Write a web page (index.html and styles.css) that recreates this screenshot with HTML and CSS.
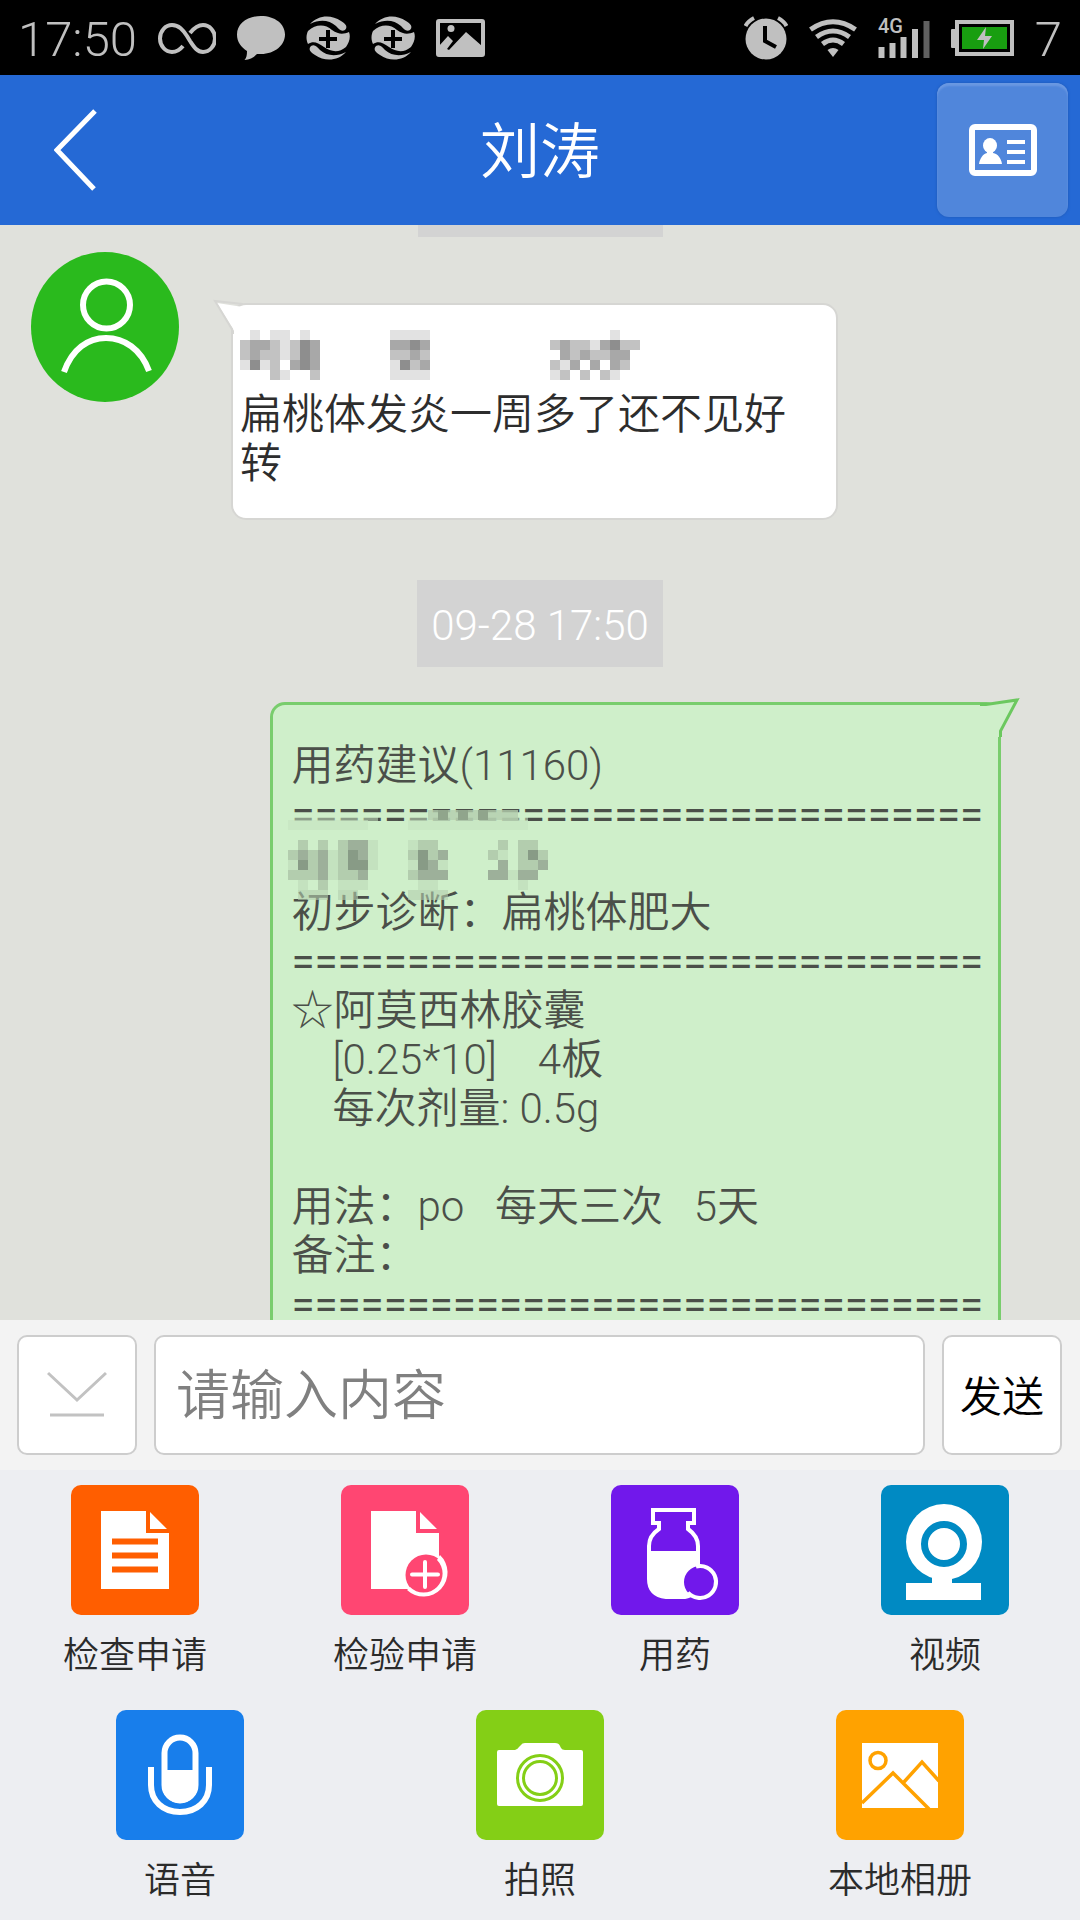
FILE: index.html
```html
<!DOCTYPE html>
<html lang="zh-CN">
<head>
<meta charset="utf-8">
<meta name="viewport" content="width=device-width, initial-scale=1">
<title>刘涛</title>
<link rel="stylesheet" href="styles.css">
</head>
<body>
<div class="status-bar">
  <div class="status-group">
    <span class="status-text">17:50</span>
    <svg class="status-icon" width="58" height="44" viewBox="0 0 58 44" aria-hidden="true"><path d="M25 30c-4 5-8 6-11 6a12 13.500 0 0 1 0-27c7 0 11 5 15 11l3 5c4 6 7 11 13 11a12 13.500 0 0 0 0-27c-5 0-9 3-13 8" fill="none" stroke="#c0c0c0" stroke-width="4"/></svg>
    <svg class="status-icon" width="48" height="44" viewBox="0 0 48 44" aria-hidden="true"><path d="M24 0c14 0 24 8 24 18.500S38 38 24 38h-4c-3 3-7 6-12.500 6 2-2 2.500-5 2.500-9C4 31 0 26 0 18.500 0 8 10 0 24 0z" fill="#c0c0c0"/></svg>
    <svg class="status-icon" width="44" height="44" viewBox="0 0 44 44" aria-hidden="true"><g id="plus-badge"><path d="M4 8C12-1 25-2 35 5c5 3 7 6 4 9-4 2-6-1-9-4C23 4 14 3 4 8zM40 36c-8 9-21 10-31 3-5-3-7-6-4-9 4-2 6 1 9 4 7 6 16 7 26 2z" fill="#c0c0c0"/><path d="M2 15c8-7 17-7 24-1 7 5 12 4 17 2 2 5 0 11-3 15-7 6-15 5-22 0-7-5-11-6-16-3-2-4-2-9 0-13z" fill="#c0c0c0"/><path d="M22 14v18M13 23h18" stroke="#000" stroke-width="4"/></g></svg>
    <svg class="status-icon" width="44" height="44" viewBox="0 0 44 44" aria-hidden="true"><use href="#plus-badge"/></svg>
    <svg class="status-icon" width="49" height="38" viewBox="0 0 49 38" aria-hidden="true"><rect x="2" y="2" width="45" height="34" rx="1" fill="none" stroke="#c0c0c0" stroke-width="4"/><circle cx="15" cy="9.500" r="3.500" fill="#c0c0c0"/><path d="M3 27l9-10 5 5-6 8 2 1L30 13l16 14v9H3z" fill="#c0c0c0"/></svg>
  </div>
  <div class="status-group">
    <svg class="status-icon" width="44" height="44" viewBox="0 0 44 44" aria-hidden="true"><circle cx="22" cy="23" r="20.500" fill="#c0c0c0"/><path d="M1.500 10Q4 5 10 2M42.500 10Q40 5 34 2" fill="none" stroke="#c0c0c0" stroke-width="4"/><path d="M21 10v15l11 6" fill="none" stroke="#000" stroke-width="4"/></svg>
    <svg class="status-icon" width="48" height="38" viewBox="0 0 48 38" aria-hidden="true"><g fill="none" stroke="#c0c0c0" stroke-width="5"><path d="M1.500 10.500Q24-5 46.500 10.500"/><path d="M7.500 18Q24 6 40.500 18"/><path d="M13.500 25Q24 17 34.500 25"/></g><path d="M18.500 31q5.500-4 11 0L24 38z" fill="#c0c0c0"/></svg>
    <svg class="status-icon signal" width="52" height="42" viewBox="0 0 52 42" aria-hidden="true"><text class="network" x="0" y="16">4G</text><path d="M3.500 30v11M14.500 26v15M25.500 20v21M37 12v29" stroke="#c0c0c0" stroke-width="6"/><path d="M48.500 4v37" stroke="#606060" stroke-width="6"/></svg>
    <svg class="status-icon" width="63" height="36" viewBox="0 0 63 36" aria-hidden="true"><rect y="9" width="5" height="19" rx="1" fill="#c0c0c0"/><rect x="6" y="2" width="55" height="32" fill="none" stroke="#c0c0c0" stroke-width="4"/><rect x="11" y="7" width="45" height="22" fill="#189e10"/><path d="M35 7l-9 13h7l-1 9 9-13h-7z" fill="#c0c0c0"/></svg>
    <span class="status-text">7</span>
  </div>
</div>

<header class="title-bar">
  <button class="back" type="button" aria-label="返回"><svg width="44" height="84" viewBox="0 0 44 84" aria-hidden="true"><path d="M41 3L3 42l37 39" fill="none" stroke="#fff" stroke-width="5"/></svg></button>
  <h1 class="title">刘涛</h1>
  <button class="card-button" type="button" aria-label="名片"><svg width="68" height="52" viewBox="0 0 68 52" aria-hidden="true"><rect x="3" y="3" width="62" height="46" rx="3" fill="none" stroke="#fff" stroke-width="6"/><ellipse cx="21" cy="21.500" rx="7" ry="7.500" fill="#fff"/><path d="M18 25h6v4c5 1 8 5 9 11H10c1-6 4-10 8-11z" fill="#fff"/><path d="M38 18h18M38 28h18M38 38h18" stroke="#fff" stroke-width="4"/></svg></button>
</header>

<main class="chat">
  <div class="time-edge"></div>

  <div class="incoming">
    <svg class="avatar" width="148" height="150" viewBox="0 0 148 150" aria-hidden="true"><ellipse cx="74" cy="75" rx="74" ry="75" fill="#2aba1d"/><ellipse cx="75.500" cy="53" rx="23.500" ry="23.500" fill="none" stroke="#fff" stroke-width="6"/><path d="M33 120C41 97 57 86 75 86s35 11 43 33" fill="none" stroke="#fff" stroke-width="6"/></svg>
    <div class="bubble bubble-in">
      <svg class="tail-in" width="40" height="40" viewBox="0 0 40 40" aria-hidden="true"><path d="M22 34L4 5l26 4v25z" fill="#fff"/><path d="M20 36V33L2 3l28 3" fill="none" stroke="#d6d6d3" stroke-width="2"/></svg>
      <svg class="masked-in" width="400" height="60" viewBox="0 0 40 6" shape-rendering="crispEdges" aria-hidden="true">
        <path stroke="#e2e2e2" d="M1 .5h1M3 .5h2M6 .5h1M15 .5h4M37 .5h1M4 1.500h1M35 1.500h1M4 2.500h1M0 3.500h1M2 3.500h1M15 3.500h1M32 3.500h1M4 4.500h1M15 4.500h4M31 4.500h1M37 4.500h1"/>
        <path stroke="#c2c2c2" d="M0 1.500h1M3 1.500h1M5 1.500h1M31 1.500h1M33 1.500h2M38 1.500h2M0 2.500h1M2 2.500h2M5 2.500h1M15 2.500h2M18 2.500h1M33 2.500h1M35 2.500h2M3 3.500h1M17 3.500h1M31 3.500h1M38 3.500h1M3 4.500h1M7 4.500h1M32 4.500h1M34 4.500h1M36 4.500h1"/>
        <path stroke="#a8a8a8" d="M1 1.500h2M7 1.500h1M15 1.500h2M18 1.500h1M32 1.500h1M36 1.500h1M1 2.500h1M7 2.500h1M17 2.500h1M32 2.500h1M34 2.500h1M37 2.500h2M5 3.500h1M7 3.500h1M18 3.500h1M33 3.500h1M35 3.500h1M37 3.500h1"/>
        <path stroke="#8e8e8e" d="M6 1.500h1M17 1.500h1M37 1.500h1M6 2.500h1M1 3.500h1M6 3.500h1M16 3.500h1"/>
      </svg>
      <p class="line">扁桃体发炎一周多了还不见好转</p>
    </div>
  </div>

  <time class="time">09-28 17:50</time>

  <div class="bubble bubble-out">
    <svg class="tail-out" width="40" height="40" viewBox="0 0 40 40" aria-hidden="true"><path d="M5 8L37 4 20 34v6H5z" fill="#cfefca"/><path d="M0 7.500h6L37 3 20.500 34v6" fill="none" stroke="#6cc85f" stroke-width="3"/></svg>
    <p class="line">用药建议(11160)</p>
    <p class="line rule">==============================</p>
    <svg class="masked-out" width="270" height="49" viewBox="0 0 270 49" shape-rendering="crispEdges" aria-hidden="true">
      <g transform="translate(-3 1) scale(10)">
        <path stroke="#cfefca" stroke-opacity=".5" d="M0-1.900h9M12-1.900h12"/>
        <path stroke="#b3cdae" stroke-opacity=".8" d="M14-2.500h9"/>
        <path stroke="#90a58c" d="M15-2.500h1M17-2.500h1M19-2.500h1"/>
        <path stroke="#c4e2bf" d="M8 .5h1M12 .5h1M4 1.500h1M8 1.500h1M21 1.500h1M0 2.500h1M4 2.500h1M8 2.500h1M12 2.500h1M15 2.500h1M4 3.500h1M22 3.500h1M1 4.500h1M5 4.500h3M13 4.500h2M23 4.500h1"/>
        <path stroke="#c4e2bf" stroke-opacity=".6" d="M0-1.500h8M12-1.500h12"/>
        <path stroke="#b3cdae" d="M1 .5h1M3 .5h1M5 .5h1M13 .5h2M21 .5h1M23 .5h2M0 1.500h1M2 1.500h1M5 1.500h1M12 1.500h1M14 1.500h1M20 1.500h1M23 1.500h1M25 1.500h1M2 2.500h1M5 2.500h1M23 2.500h2M0 3.500h3M5 3.500h2M12 3.500h1M3 4.500h1"/>
        <path stroke="#b3cdae" stroke-opacity=".6" d="M1 5.500h3M5 5.500h2M12 5.500h4"/>
        <path stroke="#9db09a" d="M6 .5h2M1 1.500h1M3 1.500h1M7 1.500h1M15 1.500h1M3 2.500h1M14 2.500h1M21 2.500h1M25 2.500h1M3 3.500h1M7 3.500h1M13 3.500h3M20 3.500h2M23 3.500h2"/>
        <path stroke="#889b86" d="M6 1.500h1M13 1.500h1M24 1.500h1M1 2.500h1M6 2.500h2M13 2.500h1"/>
      </g>
    </svg>
    <p class="line">初步诊断：扁桃体肥大</p>
    <p class="line rule">==============================</p>
    <p class="line">☆阿莫西林胶囊</p>
    <p class="line">    [0.25*10]    4板</p>
    <p class="line">    每次剂量: 0.5g</p>
    <p class="line"> </p>
    <p class="line">用法：po   每天三次   5天</p>
    <p class="line">备注：</p>
    <p class="line rule">==============================</p>
  </div>
</main>

<form class="composer">
  <button class="box toggle" type="button" aria-label="收起"><svg width="60" height="48" viewBox="0 0 60 48" aria-hidden="true"><path d="M1 2l29 27L59 2M3 44h54" fill="none" stroke="#c2c2c2" stroke-width="3"/></svg></button>
  <input class="box message" type="text" placeholder="请输入内容" aria-label="请输入内容">
  <button class="box send" type="button">发送</button>
</form>

<nav class="tools">
  <div class="tool-row">
    <button class="tool" type="button">
      <svg class="tile" width="128" height="130" viewBox="0 0 128 130" aria-hidden="true"><rect width="128" height="130" rx="10" fill="#ff5e00"/><path d="M30 26h45v22h23v56H30zM79 27l17 17H79z" fill="#fff"/><path d="M41 56.500h46M41 70.500h46M41 84.500h46" stroke="#ff5e00" stroke-width="6"/></svg>
      检查申请
    </button>
    <button class="tool" type="button">
      <svg class="tile" width="128" height="130" viewBox="0 0 128 130" aria-hidden="true"><rect width="128" height="130" rx="10" fill="#ff4672"/><path d="M30 26h45v22h23v56H30zM79 27l17 17H79z" fill="#fff"/><circle cx="85" cy="90" r="20.500" fill="#ff4672"/><path d="M99 70a22 22 0 1 1-33 35l3-3a18 18 0 1 0 27-27z" fill="#fff"/><path d="M84 77v25M71 89.500h26" stroke="#fff" stroke-width="4" stroke-linecap="round"/></svg>
      检验申请
    </button>
    <button class="tool" type="button">
      <svg class="tile" width="128" height="130" viewBox="0 0 128 130" aria-hidden="true"><rect width="128" height="130" rx="10" fill="#7118eb"/><path d="M42 25h41v13h-6v6c7 5 10 11 10 17v39q-4 12-16 12H55q-17-2-17-18V61c0-7 4-13 10-17v-6h-6z" fill="none" stroke="#fff" stroke-width="4"/><path d="M38 66h49v34q-4 12-16 12H55q-17-2-17-18z" fill="#fff"/><circle cx="89" cy="97" r="16" fill="#7118eb"/><path d="M85 81.500a16 16 0 1 1-8 26" fill="none" stroke="#fff" stroke-width="4"/></svg>
      用药
    </button>
    <button class="tool" type="button">
      <svg class="tile" width="128" height="130" viewBox="0 0 128 130" aria-hidden="true"><rect width="128" height="130" rx="10" fill="#008ac3"/><circle cx="63" cy="57" r="38" fill="#fff"/><path d="M51 88h20v10h29v17H25V98h26z" fill="#fff"/><circle cx="63" cy="59" r="19.500" fill="#fff" stroke="#008ac3" stroke-width="7"/></svg>
      视频
    </button>
  </div>
  <div class="tool-row">
    <button class="tool" type="button">
      <svg class="tile" width="128" height="130" viewBox="0 0 128 130" aria-hidden="true"><rect width="128" height="130" rx="10" fill="#187eeb"/><rect x="48.500" y="27.500" width="31" height="63" rx="15.500" fill="none" stroke="#fff" stroke-width="6"/><path d="M46 60h36v15a18 18 0 0 1-36 0z" fill="#fff"/><path d="M35 57v18c0 16 12 27 29 27s29-11 29-27V57" fill="none" stroke="#fff" stroke-width="6"/></svg>
      语音
    </button>
    <button class="tool" type="button">
      <svg class="tile" width="128" height="130" viewBox="0 0 128 130" aria-hidden="true"><rect width="128" height="130" rx="10" fill="#84cf16"/><path d="M23 40h16q3-1 4-3l2-2q1-2 4-2h30q4 0 5 3l1 2q1 2 4 2h16q2 0 2 2v52q0 2-2 2H23q-2 0-2-2V42q0-2 2-2z" fill="#fff"/><g fill="none" stroke="#84cf16" stroke-width="3"><circle cx="64" cy="68" r="22.500"/><circle cx="64" cy="68" r="16.500"/></g></svg>
      拍照
    </button>
    <button class="tool" type="button">
      <svg class="tile" width="128" height="130" viewBox="0 0 128 130" aria-hidden="true"><rect width="128" height="130" rx="10" fill="#ffa200"/><path d="M26 33h76v65H26z" fill="#fff"/><g fill="none" stroke="#ffa200" stroke-width="3.500"><circle cx="42" cy="50.500" r="8"/><path d="M26 93l31-30 36 36M68 72l18-20 17 19"/></g></svg>
      本地相册
    </button>
  </div>
</nav>
</body>
</html>
```
FILE: styles.css
```css
* {
  box-sizing: border-box;
}

body {
  margin: 0;
  min-width: 900px;
  height: 100vh;
  display: flex;
  flex-direction: column;
  background: #edeef2;
  font-family: Roboto, "Noto Sans CJK SC", sans-serif;
  font-weight: 350;
}

button,
input {
  font: inherit;
}

button {
  padding: 0;
  border: 0;
  background: none;
}

svg {
  display: block;
  flex: none;
}

.status-bar {
  flex: none;
  display: flex;
  justify-content: space-between;
  height: 75px;
  padding: 0 18px;
  background: #000;
}

.status-group {
  display: flex;
  align-items: center;
  gap: 21px;
}

.status-text {
  padding-top: 4px;
  color: #c0c0c0;
  font-size: 49px;
  line-height: 71px;
}

.signal {
  overflow: visible;
}

.network {
  fill: #c0c0c0;
  font-size: 20px;
  font-weight: 500;
}

.title-bar {
  flex: none;
  display: grid;
  grid-template-columns: 1fr auto 1fr;
  align-items: center;
  height: 150px;
  padding: 0 12px;
  background: #2569d5;
}

.back {
  justify-self: start;
  padding: 20px 42px;
}

.title {
  margin: 0;
  padding-top: 6px;
  color: #fff;
  font-size: 60px;
  font-weight: 350;
  line-height: 72px;
}

.card-button {
  justify-self: end;
  display: flex;
  align-items: center;
  justify-content: center;
  width: 131px;
  height: 134px;
  border-radius: 12px;
  background: #5086db;
  box-shadow: inset 0 3px 2px #6a98e2, 0 0 3px #1d57b4;
}

.chat {
  flex: 1;
  min-height: 0;
  overflow: hidden;
  display: flex;
  flex-direction: column;
  background: #e0e1dc;
}

.time-edge {
  flex: none;
  align-self: center;
  width: 245px;
  height: 12px;
  background: #d3d3d3;
}

.incoming {
  flex: none;
  display: flex;
  align-items: flex-start;
  gap: 52px;
  margin: 15px 242px 0 31px;
}

.bubble {
  position: relative;
  font-size: 42px;
  line-height: 49px;
}

.bubble-in {
  flex: 1;
  margin-top: 51px;
  padding: 25px 45px 30px 7px;
  border: 2px solid #d6d6d3;
  border-radius: 15px;
  background: #fff;
  color: #2d2d2d;
}

.tail-in {
  position: absolute;
  top: -7px;
  left: -20px;
}

.line {
  margin: 0;
  min-height: 49px;
  white-space: pre-wrap;
}

.rule {
  font-weight: 400;
}

.time {
  flex: none;
  align-self: center;
  margin: 60px 0 35px;
  padding: 4px 14px 0;
  background: #d3d3d3;
  color: #fff;
  font-size: 42px;
  line-height: 83px;
}

.bubble-out {
  flex: none;
  align-self: flex-end;
  margin-right: 79px;
  padding: 36px 15px 35px 18px;
  border: 3px solid #79cd6d;
  border-radius: 15px;
  background: #cfefca;
  color: #4b4f49;
}

.tail-out {
  position: absolute;
  top: -8px;
  right: -22px;
}

.masked-out {
  position: relative;
  overflow: visible;
}

.composer {
  flex: none;
  display: flex;
  gap: 17px;
  padding: 15px 18px 15px 17px;
  background: #f3f3f3;
}

.box {
  height: 120px;
  border: 2px solid #cdcdcd;
  border-radius: 10px;
  background: #fff;
}

.toggle,
.send {
  flex: none;
  display: flex;
  align-items: center;
  justify-content: center;
  width: 120px;
}

.message {
  flex: 1;
  min-width: 0;
  padding: 2px 20px 0;
  color: #000;
  font-size: 54px;
}

.message::placeholder {
  color: #808080;
  opacity: 1;
}

.send {
  padding-bottom: 4px;
  color: #000;
  font-size: 42px;
}

.tools {
  flex: none;
  display: flex;
  flex-direction: column;
  gap: 15px;
  padding-top: 15px;
}

.tool-row {
  display: flex;
}

.tool {
  flex: 1;
  display: flex;
  flex-direction: column;
  align-items: center;
  gap: 20px;
  height: 210px;
  color: #2b2b2b;
  font-size: 36px;
  line-height: 42px;
}
```
